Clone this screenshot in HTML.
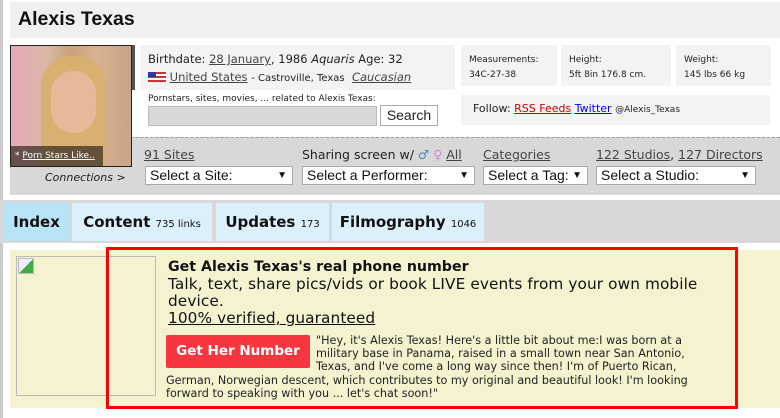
<!DOCTYPE html>
<html><head><style>
*{margin:0;padding:0;box-sizing:border-box}
body{width:780px;height:418px;overflow:hidden;background:#fff;position:relative;font-family:"DejaVu Sans",Verdana,sans-serif;color:#222}
.a{position:absolute}
a{color:#444;text-decoration:underline}
.sel{position:absolute;height:19px;background:#fff;border:1px solid #aaa;font-family:"Liberation Sans",Arial,sans-serif;font-size:14px;color:#111;padding:0 0 0 4px;line-height:17px}
.sel:after{content:"▼";position:absolute;right:5px;top:0;font-size:10px}
.tab{position:absolute;top:203px;height:38px;background:#dbf0fb;font-weight:bold;font-size:15px;color:#111;line-height:38px;text-align:center}
.tab small{font-weight:normal;font-size:10px}
.ad{font-family:"DejaVu Sans",sans-serif;color:#111}
</style></head><body>
<div class="a" style="left:0;top:0;width:3px;height:418px;background:#ccc"></div>
<div class="a" style="left:10px;top:2px;width:770px;height:36px;background:#f0f0f0"></div>
<div class="a" style="left:18px;top:8px;font-size:19.5px;font-weight:bold;color:#111;font-family:'Liberation Sans',Arial,sans-serif">Alexis Texas</div>

<div class="a" style="left:10px;top:137px;width:770px;height:58px;background:#d8d8d8;border-top:1px dashed #999"></div>
<div class="a" style="left:10px;top:45px;width:122px;height:122px;border:1px solid #222;background:linear-gradient(90deg,#e8a9b8 0,#d9b8a6 30%,#c9a178 50%,#d9b38f 70%,#c8a58a 100%)">
<div class="a" style="left:30px;top:10px;width:65px;height:110px;border-radius:30px 30px 0 0;background:#d8b070"></div>
<div class="a" style="left:40px;top:25px;width:45px;height:62px;border-radius:22px;background:#e8b89a"></div>
<div class="a" style="left:0;bottom:0;width:92px;height:20px;background:rgba(60,50,40,.75);color:#fff;font-size:9px;line-height:20px;padding-left:4px">* <span style="text-decoration:underline">Porn Stars Like..</span></div>
</div>
<div class="a" style="left:132px;top:45px;width:3px;height:45px;background:#555"></div>
<div class="a" style="left:45px;top:171px;font-size:11px;font-style:italic;color:#222">Connections &gt;</div>

<div class="a" style="left:140px;top:45px;width:315px;height:45px;background:#f3f3f3"></div>
<div class="a" style="left:148px;top:52px;font-size:11.5px">Birthdate: <a>28 January</a>, 1986 <i>Aquaris</i> Age: 32</div>
<div class="a" style="left:148px;top:70px;font-size:11.5px"><span style="display:inline-block;width:18px;height:10px;background:linear-gradient(#c33 0 20%,#fff 20% 40%,#c33 40% 60%,#fff 60% 80%,#c33 80%);position:relative;vertical-align:-1px"><span style="position:absolute;left:0;top:0;width:8px;height:5px;background:#33a"></span></span> <a>United States</a> <span style="font-size:10px">- Castroville, Texas</span> &nbsp;<a><i>Caucasian</i></a></div>
<div class="a" style="left:148px;top:94px;font-size:9px">Pornstars, sites, movies, ... related to Alexis Texas:</div>
<div class="a" style="left:148px;top:106px;width:229px;height:20px;background:#d8d8d8;border:1px solid #bbb"></div>
<div class="a" style="left:380px;top:105px;width:58px;height:21px;background:#fff;border:1px solid #aaa;font-family:'Liberation Sans',Arial,sans-serif;font-size:14px;text-align:center;line-height:19px">Search</div>

<div class="a" style="left:461px;top:45px;width:96px;height:41px;background:#f3f3f3;font-size:9px;padding:8px 0 0 8px;line-height:15px">Measurements:<br>34C-27-38</div>
<div class="a" style="left:561px;top:45px;width:110px;height:41px;background:#f3f3f3;font-size:9px;padding:8px 0 0 8px;line-height:15px">Height:<br>5ft 8in 176.8 cm.</div>
<div class="a" style="left:676px;top:45px;width:95px;height:41px;background:#f3f3f3;font-size:9px;padding:8px 0 0 8px;line-height:15px">Weight:<br>145 lbs 66 kg</div>
<div class="a" style="left:461px;top:95px;width:309px;height:30px;background:#f3f3f3;font-size:11px;padding:7px 0 0 12px">Follow: <a style="color:#c00">RSS Feeds</a> <a style="color:#00f">Twitter</a> <span style="font-size:9px">@Alexis_Texas</span></div>

<div class="a" style="left:144px;top:147px;font-size:12.5px"><a>91 Sites</a></div>
<div class="a" style="left:302px;top:147px;font-size:12.5px;color:#222">Sharing screen w/ <span style="color:#48c">♂</span> <span style="color:#c8c">♀</span> <a>All</a></div>
<div class="a" style="left:483px;top:147px;font-size:12.5px"><a>Categories</a></div>
<div class="a" style="left:596px;top:147px;font-size:12.5px"><a>122 Studios</a>, <a>127 Directors</a></div>
<div class="sel" style="left:145px;top:166px;width:148px">Select a Site:</div>
<div class="sel" style="left:302px;top:166px;width:173px">Select a Performer:</div>
<div class="sel" style="left:483px;top:166px;width:105px">Select a Tag:</div>
<div class="sel" style="left:596px;top:166px;width:160px">Select a Studio:</div>

<div class="a" style="left:0;top:200px;width:780px;height:43px;background:#d8d8d8"></div>
<div class="tab" style="left:4px;width:65px;background:#b8e4f8">Index</div>
<div class="tab" style="left:72px;width:140px">Content <small>735 links</small></div>
<div class="tab" style="left:216px;width:113px">Updates <small>173</small></div>
<div class="tab" style="left:332px;width:152px">Filmography <small>1046</small></div>

<div class="a" style="left:10px;top:250px;width:770px;height:158px;background:#f5f2d0"></div>
<div class="a" style="left:16px;top:256px;width:140px;height:140px;border:1px solid #bbb"></div>
<div class="a" style="left:18px;top:258px;width:16px;height:16px;border:1px solid #bbb;background:linear-gradient(135deg,#eef 50%,#4a4 50%)"></div>
<div class="a" style="left:106px;top:247px;width:632px;height:162px;border:3px solid #f00"></div>
<div class="a ad" style="left:168px;top:259px;font-size:14.2px;font-weight:bold">Get Alexis Texas's real phone number</div>
<div class="a ad" style="left:168px;top:276px;width:545px;font-size:15.3px;letter-spacing:.1px;line-height:17px">Talk, text, share pics/vids or book LIVE events from your own mobile device.<br><span style="text-decoration:underline">100% verified, guaranteed</span></div>
<div class="a ad" style="left:166px;top:335px;width:144px;height:33px;background:#f8363f;border-radius:2px;color:#fff;font-weight:bold;font-size:13.5px;text-align:center;line-height:33px">Get Her Number</div>
<div class="a ad" style="left:166px;top:334px;width:545px;font-size:11.2px;line-height:13.2px;color:#222"><span style="float:left;width:150px;height:38px"></span>"Hey, it's Alexis Texas! Here's a little bit about me:I was born at a military base in Panama, raised in a small town near San Antonio, Texas, and I've come a long way since then! I'm of Puerto Rican, German, Norwegian descent, which contributes to my original and beautiful look! I'm looking forward to speaking with you ... let's chat soon!"</div>
</body></html>
